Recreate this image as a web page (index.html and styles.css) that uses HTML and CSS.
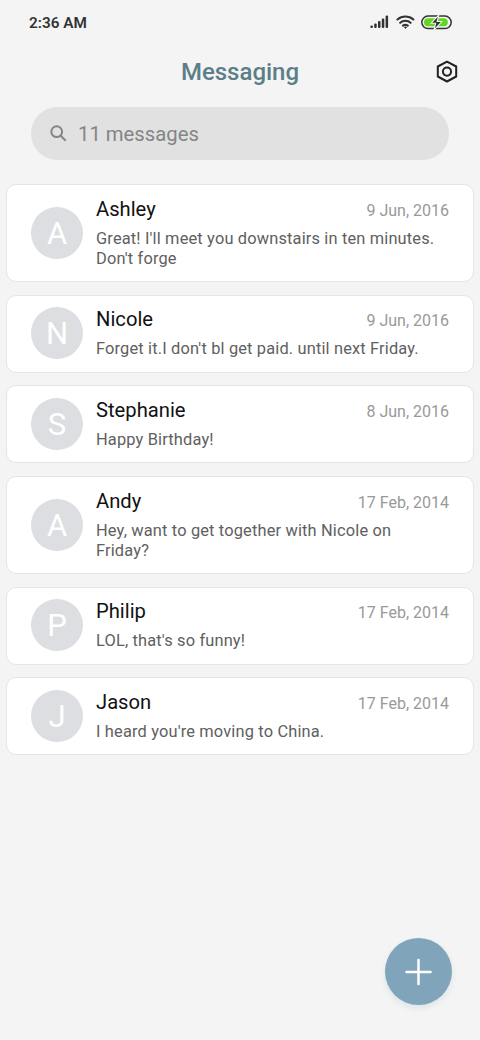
FILE: index.html
```html
<!DOCTYPE html>
<html lang="en">
<head>
<meta charset="utf-8">
<meta name="viewport" content="width=device-width, initial-scale=1">
<title>Messaging</title>
<link rel="stylesheet" href="styles.css">
</head>
<body>
<div class="screen">
  <div class="status">
    <span class="clock">2:36 AM</span>
    <div class="indicators">
      <svg width="20" height="14" viewBox="0 0 20 14" fill="#333"><rect x=".4" y="10.6" width="2.5" height="2.4" rx="1"/><rect x="4.2" y="8.4" width="2.5" height="4.6" rx="1"/><rect x="8" y="6" width="2.5" height="7" rx="1"/><rect x="11.8" y="3.4" width="2.5" height="9.6" rx="1"/><rect x="15.6" y=".4" width="2.5" height="12.6" rx="1"/></svg>
      <svg width="20" height="14" viewBox="0 0 20 14" fill="none" stroke="#333" stroke-width="2.1" stroke-linecap="round"><path d="M1.4 4.5a12 12 0 0 1 16 0M4.2 7.8a7.8 7.8 0 0 1 10.4 0M7 10.7a4 4 0 0 1 4.8 0"/><circle cx="9.4" cy="12.6" r=".7" fill="#333" stroke-width="1"/></svg>
      <svg width="31" height="15" viewBox="0 0 31 15"><rect x=".8" y="1.1" width="29.4" height="12.4" rx="6.2" fill="#f4f4f4" stroke="#333" stroke-width="1.5"/><rect x="3" y="3.3" width="23.8" height="8" rx="4" fill="#60d522"/><path d="M17.8 0 10.2 8.2h4.4L13 15l7.9-8.5h-4.7z" fill="#333" stroke="#f4f4f4" stroke-width="1.1"/></svg>
    </div>
  </div>
  <header class="header">
    <h1 class="title">Messaging</h1>
    <svg class="settings" width="22" height="24" viewBox="0 0 22 24" fill="none" stroke="#222" stroke-width="2"><path stroke-linejoin="round" d="M11 1.7 20.2 6.5v10L11 21.5 1.8 16.5v-10z"/><circle cx="11" cy="11.6" r="4.1"/></svg>
  </header>
  <div class="search">
    <svg width="17" height="17" viewBox="0 0 17 17" fill="none" stroke="#858585" stroke-width="2"><circle cx="6.7" cy="6.7" r="5.4"/><path d="m10.5 10.5 5.2 5.2"/></svg>
    <span class="hint">11 messages</span>
  </div>
  <main class="list">
    <article class="card"><div class="avatar">A</div><div class="content"><div class="top"><h2 class="name">Ashley</h2><time class="date">9 Jun, 2016</time></div><p class="text">Great! I'll meet you downstairs in ten minutes.<br>Don't forge</p></div></article>
    <article class="card"><div class="avatar">N</div><div class="content"><div class="top"><h2 class="name">Nicole</h2><time class="date">9 Jun, 2016</time></div><p class="text">Forget it.I don't bl get paid. until next Friday.</p></div></article>
    <article class="card"><div class="avatar">S</div><div class="content"><div class="top"><h2 class="name">Stephanie</h2><time class="date">8 Jun, 2016</time></div><p class="text">Happy Birthday!</p></div></article>
    <article class="card"><div class="avatar">A</div><div class="content"><div class="top"><h2 class="name">Andy</h2><time class="date">17 Feb, 2014</time></div><p class="text">Hey, want to get together with Nicole on<br>Friday?</p></div></article>
    <article class="card"><div class="avatar">P</div><div class="content"><div class="top"><h2 class="name">Philip</h2><time class="date">17 Feb, 2014</time></div><p class="text">LOL, that's so funny!</p></div></article>
    <article class="card"><div class="avatar">J</div><div class="content"><div class="top"><h2 class="name">Jason</h2><time class="date">17 Feb, 2014</time></div><p class="text">I heard you're moving to China.</p></div></article>
  </main>
  <button class="compose" aria-label="New message"><svg width="28" height="28" viewBox="0 0 28 28" stroke="#fff" stroke-width="2.5" stroke-linecap="round"><path d="M13.5 2v24M1.5 14h24"/></svg></button>
</div>
</body>
</html>
```

FILE: styles.css
```css
* { box-sizing: border-box; }
body { margin: 0; background: #f4f4f4; font-family: Roboto, "Liberation Sans", sans-serif; }
h1, h2, p { margin: 0; }
svg { display: block; flex: none; }
.screen { position: relative; width: 480px; height: 1040px; overflow: hidden; }
.status { display: flex; justify-content: space-between; align-items: center; height: 44px; padding: 0 28px 0 29px; }
.clock { padding-top: 1px; font-size: 15.3px; font-weight: 600; color: #333; }
.indicators { display: flex; align-items: center; gap: 5.5px; }
.header { display: grid; grid-template-columns: 1fr auto 1fr; align-items: center; height: 56px; padding: 0 22px; }
.title { grid-column: 2; font-size: 24px; line-height: 28px; font-weight: 500; color: #5b7e88; }
.settings { justify-self: end; }
.search { display: flex; align-items: center; gap: 11px; height: 53px; margin: 7px 31px 0; padding: 0 19px; border-radius: 27px; background: #e1e1e1; color: #858585; }
.hint { padding-top: 1px; font-size: 20.3px; }
.list { display: flex; flex-direction: column; gap: 12.8px; padding: 24.3px 6px 0; }
.card { display: flex; align-items: center; gap: 13px; padding: 10.5px 24px 12.5px; background: #fff; border: 1px solid #e5e5e6; border-radius: 10px; }
.avatar { flex: none; width: 52px; height: 52px; margin-top: 1px; border-radius: 50%; background: #dddee2; color: #fff; font-size: 31px; line-height: 54px; text-align: center; }
.content { flex: 1; min-width: 0; }
.top { display: flex; justify-content: space-between; align-items: baseline; height: 33.2px; }
.name { font-size: 20.2px; line-height: 26px; font-weight: 400; color: #111; }
.date { font-size: 16px; color: #999; }
.text { font-size: 16.4px; letter-spacing: .16px; line-height: 19.7px; color: #606060; white-space: nowrap; }
.compose { position: absolute; left: 385px; top: 938px; display: grid; place-items: center; width: 67px; height: 67px; padding: 0; border: 0; border-radius: 50%; background: #80a5ba; box-shadow: 0 3px 6px rgba(100, 140, 170, .16); }
```
